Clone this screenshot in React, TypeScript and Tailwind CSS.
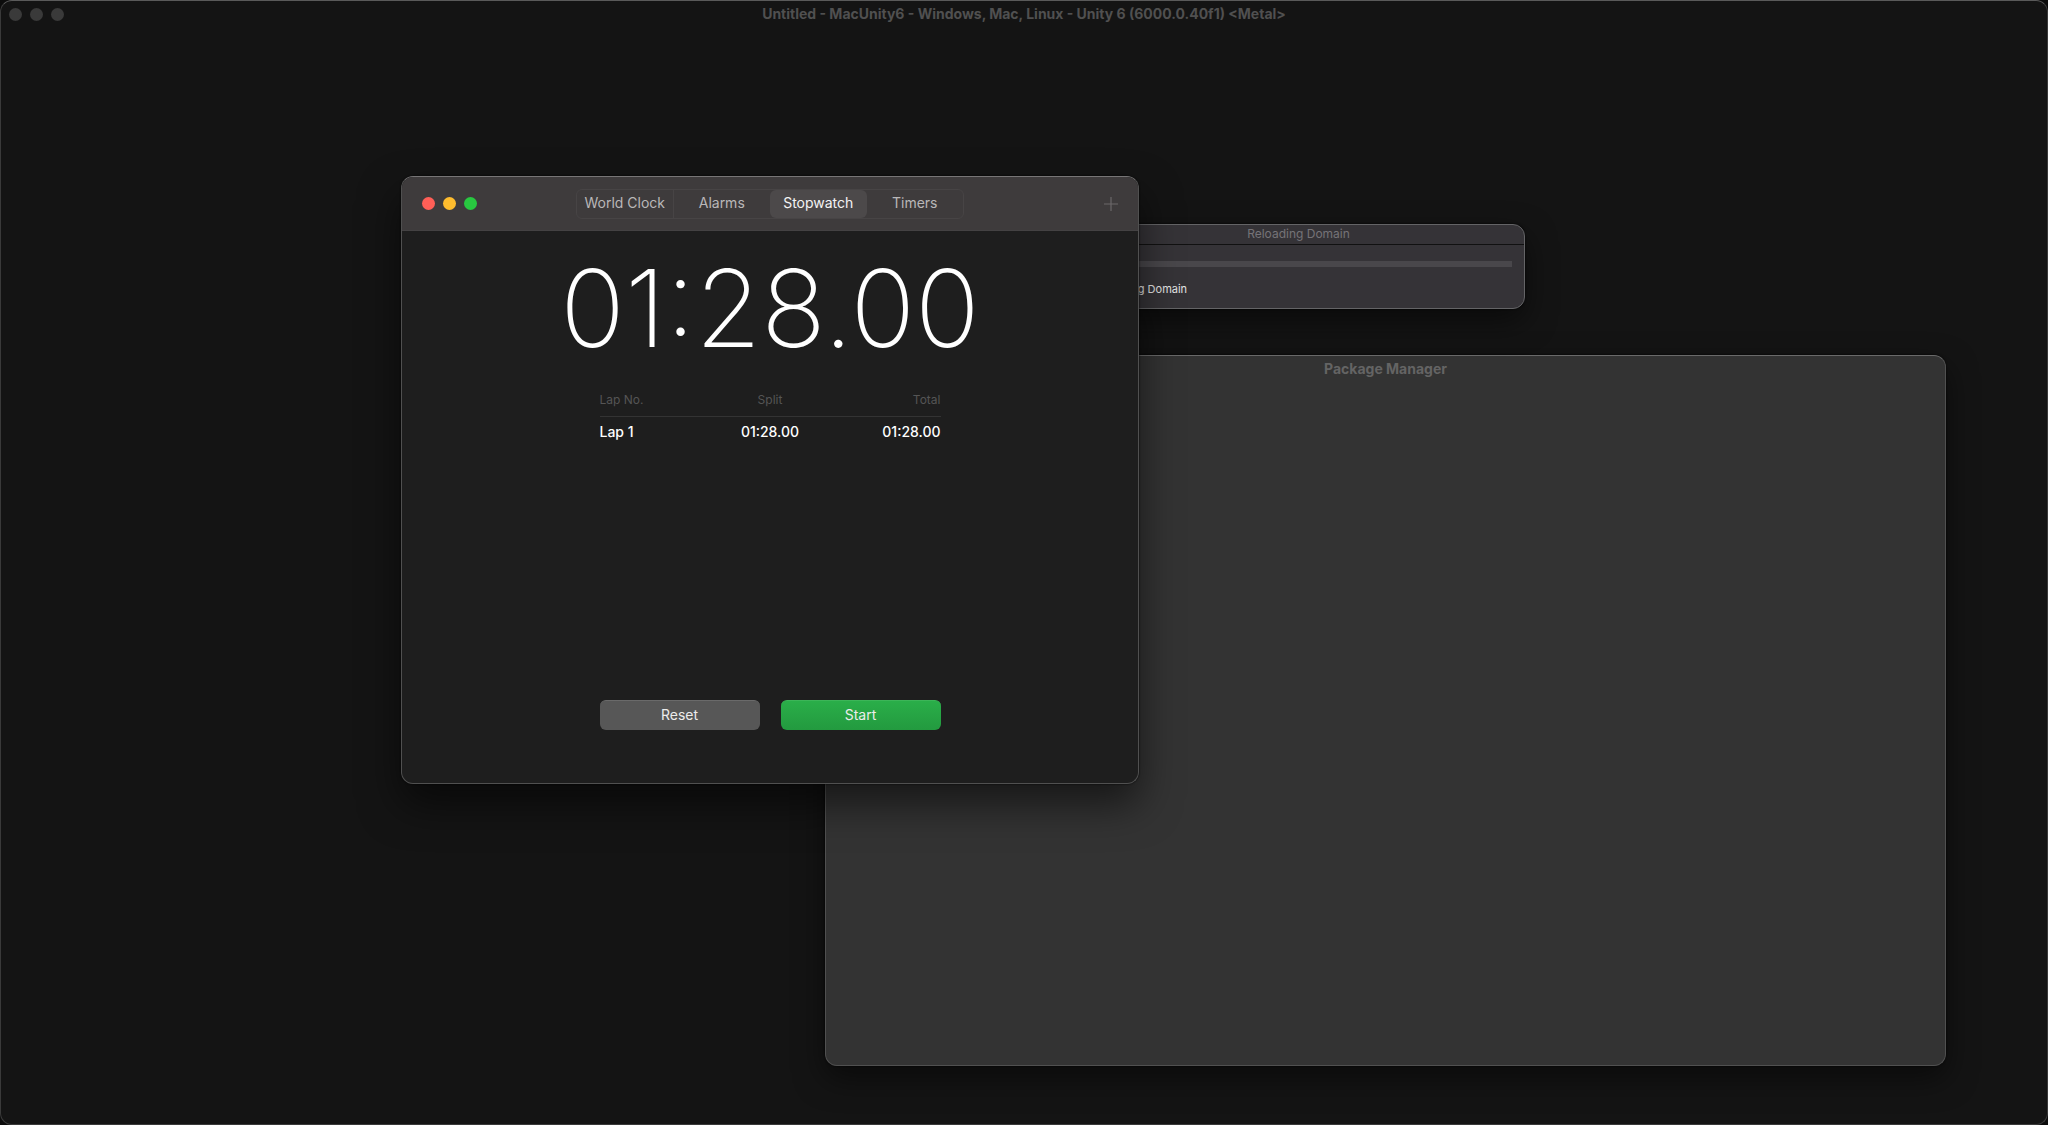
import { useState } from 'react';

const TABS = ['World Clock', 'Alarms', 'Stopwatch', 'Timers'];

const LAPS = [{ name: 'Lap 1', split: '01:28.00', total: '01:28.00' }];

function EditorTitleBar() {
  return (
    <header className="relative flex h-[26px] items-center px-2">
      <div className="flex gap-2">
        <button aria-label="Close editor" className="h-[13px] w-[13px] rounded-full bg-[#3a3a3a]" />
        <button aria-label="Minimize editor" className="h-[13px] w-[13px] rounded-full bg-[#3a3a3a]" />
        <button aria-label="Zoom editor" className="h-[13px] w-[13px] rounded-full bg-[#3a3a3a]" />
      </div>
      <h1 className="absolute inset-x-0 text-center text-sm font-bold text-[#505050]">
        Untitled - MacUnity6 - Windows, Mac, Linux - Unity 6 (6000.0.40f1) &lt;Metal&gt;
      </h1>
    </header>
  );
}

function PackageManagerWindow() {
  return (
    <section className="absolute left-[824px] top-[354px] h-[711px] w-[1121px] rounded-xl border border-[#505050] border-t-[#6a6a6a] bg-[#333333] shadow-[0_12px_30px_rgba(0,0,0,0.5),0_0_2px_#000]">
      <h2 className="pt-[3px] text-center text-sm font-bold text-[#646464]">Package Manager</h2>
    </section>
  );
}

function ReloadingWindow() {
  return (
    <section className="absolute left-[1071px] top-[223px] h-[85px] w-[453px] rounded-xl border border-[#646466] bg-[#353337] shadow-[0_12px_30px_rgba(0,0,0,0.5),0_0_2px_#000]">
      <h2 className="h-5 border-b border-[#111111] text-center text-xs leading-[18px] text-[#757378]">
        Reloading Domain
      </h2>
      <div className="px-3 pt-4">
        <div className="h-[6px] bg-[#49474b]" />
        <p className="mt-[14px] px-2 text-[11px] leading-4 text-[#e4e4e4]">Reloading Domain</p>
      </div>
    </section>
  );
}

function StopwatchWindow() {
  const [tab, setTab] = useState('Stopwatch');

  return (
    <section className="absolute left-[400px] top-[175px] flex h-[608px] w-[738px] flex-col overflow-hidden rounded-xl border border-[#505050] border-t-[#777576] bg-[#1e1e1e] shadow-[0_20px_40px_rgba(0,0,0,0.55),0_0_2px_#000]">
      <header className="relative flex h-[54px] shrink-0 items-center justify-between border-b border-[#444243] bg-[#3e3b3c] px-5">
        <div className="flex gap-2">
          <button aria-label="Close" className="h-[13px] w-[13px] rounded-full bg-[#ff5f57]" />
          <button aria-label="Minimize" className="h-[13px] w-[13px] rounded-full bg-[#febc2e]" />
          <button aria-label="Zoom" className="h-[13px] w-[13px] rounded-full bg-[#28c840]" />
        </div>
        <nav className="absolute left-1/2 grid h-[30px] w-[388px] -translate-x-1/2 grid-cols-4 rounded-md border border-[#474445]">
          {TABS.map((name, i) => (
            <button
              key={name}
              onClick={() => setTab(name)}
              className={`pb-[2px] text-sm ${
                tab === name
                  ? 'rounded-md bg-[#4c494a] text-[#f4f4f4]'
                  : `text-[#b9b7b8] ${i === 0 ? 'border-r border-[#474445]' : ''}`
              }`}
            >
              {name}
            </button>
          ))}
        </nav>
        <button aria-label="Add" className="text-[#6b6869]">
          <svg width="14" height="14" viewBox="0 0 14 14" stroke="currentColor" strokeWidth="1.2">
            <path d="M7 0v14M0 7h14" />
          </svg>
        </button>
      </header>

      <div className="flex flex-1 flex-col items-center pb-[53px]">
        <p className="mt-6 text-[107px] leading-[106px] font-extralight text-white">01:28.00</p>

        <table className="mt-7 w-[341px] table-fixed text-sm text-white">
          <thead>
            <tr className="h-[27px] border-b border-[#333333] text-xs text-[#555555]">
              <th className="pb-1 text-left font-normal">Lap No.</th>
              <th className="pb-1 text-center font-normal">Split</th>
              <th className="pb-1 text-right font-normal">Total</th>
            </tr>
          </thead>
          <tbody>
            {LAPS.map((lap) => (
              <tr key={lap.name} className="h-8 font-medium">
                <td className="text-left">{lap.name}</td>
                <td className="text-center">{lap.split}</td>
                <td className="text-right">{lap.total}</td>
              </tr>
            ))}
          </tbody>
        </table>

        <div className="mt-auto flex w-[341px] gap-[21px] text-sm text-[#ececec]">
          <button className="h-[30px] flex-1 rounded-md border-t border-[#6a6a6a] bg-[#575757] pb-[2px]">Reset</button>
          <button className="h-[30px] flex-1 rounded-md border-t border-[#3cb558] bg-linear-to-b from-[#2aae49] to-[#239a3f] pb-[2px]">
            Start
          </button>
        </div>
      </div>
    </section>
  );
}

export default function App() {
  return (
    <div className="min-h-screen bg-[#0c0c0c] font-['Inter',sans-serif]">
      <main className="relative min-h-screen overflow-hidden rounded-xl border border-[#3a3a3a] border-t-[#5a5a5a] bg-[#141414]">
        <EditorTitleBar />
        <PackageManagerWindow />
        <ReloadingWindow />
        <StopwatchWindow />
      </main>
    </div>
  );
}
